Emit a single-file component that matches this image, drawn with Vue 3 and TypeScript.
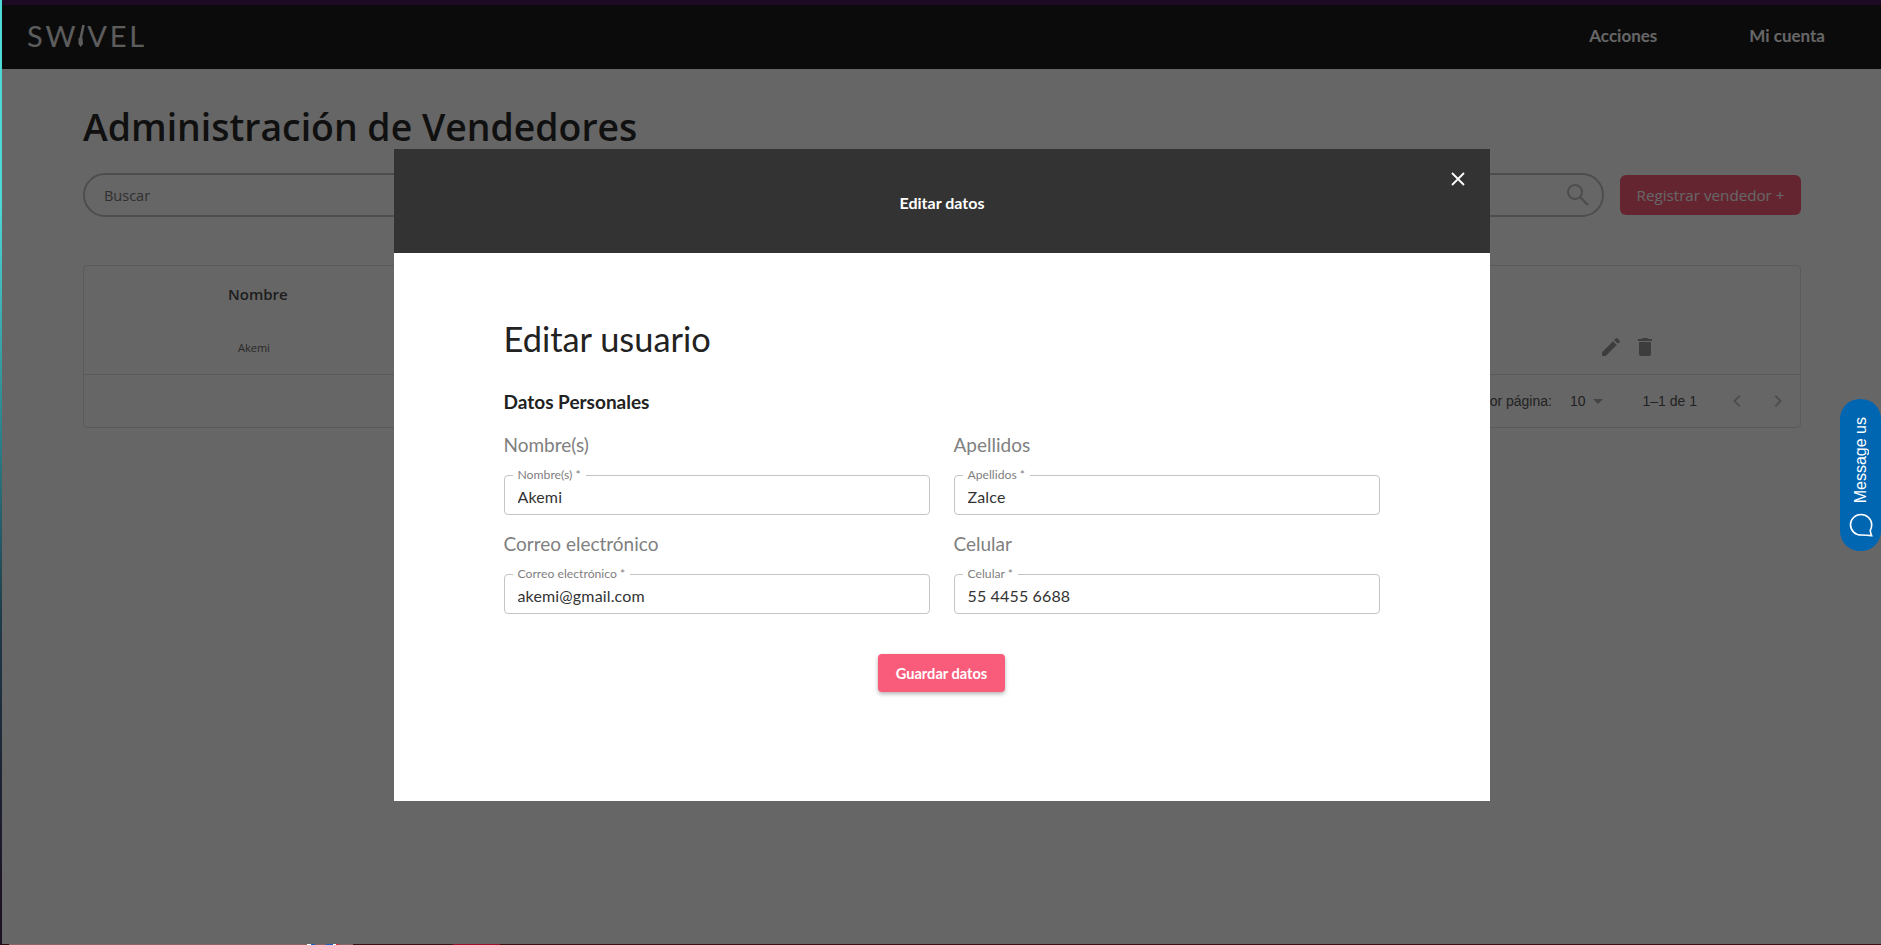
<script setup lang="ts">
const fields = [
  { label: 'Nombre(s)', value: 'Akemi' },
  { label: 'Apellidos', value: 'Zalce' },
  { label: 'Correo electrónico', value: 'akemi@gmail.com' },
  { label: 'Celular', value: '55 4455 6688' },
]
</script>

<template>
  <div class="page">
    <div class="top-strip" />
    <header class="navbar">
      <div class="logo">SW<svg class="logo-i" viewBox="0 0 10 24" width="10" height="24"><path d="M7.5 2 L4.5 16" stroke="currentColor" stroke-width="2.6" fill="none" /><path d="M2.5 15 L6.5 15 L7 21 L4.7 24 L2.5 21 Z" fill="currentColor" /></svg>VEL</div>
      <nav class="nav-links">
        <a>Acciones</a>
        <a>Mi cuenta</a>
      </nav>
    </header>

    <main class="content">
      <h1 class="title">Administración de Vendedores</h1>
      <div class="toolbar">
        <div class="search">
          <span class="search-text">Buscar</span>
          <svg viewBox="0 0 22 22" width="22" height="22" class="search-icon">
            <circle cx="8" cy="8" r="7" fill="none" stroke="currentColor" stroke-width="2" />
            <path d="M13 13 L21 21" stroke="currentColor" stroke-width="2.4" fill="none" />
          </svg>
        </div>
        <button class="register">Registrar vendedor +</button>
      </div>

      <section class="table">
        <div class="table-head">
          <span class="th">Nombre</span>
        </div>
        <div class="table-row">
          <span class="td">Akemi</span>
          <div class="row-actions">
            <svg viewBox="0 0 24 24" width="24" height="24"><path d="M3 17.25V21h3.75L17.81 9.94l-3.75-3.75L3 17.25zM20.71 7.04a1 1 0 0 0 0-1.41l-2.34-2.34a1 1 0 0 0-1.41 0l-1.83 1.83 3.75 3.75 1.83-1.83z" fill="currentColor" /></svg>
            <svg viewBox="0 0 24 24" width="24" height="24"><path d="M6 19c0 1.1.9 2 2 2h8c1.1 0 2-.9 2-2V7H6v12zM19 4h-3.5l-1-1h-5l-1 1H5v2h14V4z" fill="currentColor" /></svg>
          </div>
        </div>
        <div class="table-foot">
          <span>Filas por página:</span>
          <span class="per-page">10<i class="caret" /></span>
          <span class="range">1–1 de 1</span>
          <div class="pager">
            <svg viewBox="0 0 24 24" width="24" height="24"><path d="M15.41 7.41 14 6l-6 6 6 6 1.41-1.41L10.83 12z" fill="currentColor" /></svg>
            <svg viewBox="0 0 24 24" width="24" height="24"><path d="M8.59 16.59 10 18l6-6-6-6-1.41 1.41L13.17 12z" fill="currentColor" /></svg>
          </div>
        </div>
      </section>
    </main>

    <div class="overlay">
      <div class="modal">
        <div class="modal-head">
          <span class="modal-title">Editar datos</span>
          <svg class="close" viewBox="0 0 14 14" width="14" height="14"><path d="M1 1 L13 13 M13 1 L1 13" stroke="#fff" stroke-width="1.8" fill="none" /></svg>
        </div>
        <div class="modal-body">
          <h2 class="form-title">Editar usuario</h2>
          <h3 class="form-sub">Datos Personales</h3>
          <div class="form-grid">
            <div v-for="f in fields" :key="f.label" class="field">
              <label class="field-label">{{ f.label }}</label>
              <fieldset class="outline">
                <legend>{{ f.label }} *</legend>
                <input class="field-input" :value="f.value" readonly />
              </fieldset>
            </div>
          </div>
          <div class="actions">
            <button class="save">Guardar datos</button>
          </div>
        </div>
      </div>
    </div>

    <div class="message-us">
      <span class="message-text">Message us</span>
      <svg viewBox="0 0 24 24" width="24" height="24" class="message-icon">
        <path d="M12 1.5 C6.2 1.5 1.5 6 1.5 11.8 C1.5 17.6 6.2 22 12 22 C14 22 18 22 22.6 22.6 C22 21 21.5 19.5 21.2 17.5 C22.2 16 22.7 14 22.7 11.8 C22.7 6 17.8 1.5 12 1.5 Z" fill="none" stroke="#fff" stroke-width="1.6" />
      </svg>
    </div>
    <div class="bottom-strip" />
    <div class="left-strip" />
  </div>
</template>

<style scoped>
.page {
  position: relative;
  height: 945px;
  overflow: hidden;
  background: #fff;
  font-family: "Lato", sans-serif;
}
.top-strip { height: 5px; background: #4d1a5c; }
.navbar {
  height: 64px;
  background: #1c1c1c;
  display: flex;
  align-items: center;
  justify-content: space-between;
  padding: 0 56px 4px 27px;
  box-sizing: border-box;
}
.logo {
  display: flex;
  align-items: center;
  font-family: "Lato", sans-serif;
  font-weight: 400;
  font-size: 29px;
  letter-spacing: 2.8px;
  color: #e8e8e8;
}
.logo-i { margin: 0 1px 0 -2px; }
.nav-links {
  display: flex;
  gap: 92px;
  font-weight: 700;
  font-size: 17px;
  color: #fff;
}

.content { padding: 34px 80px 0 83px; }
.title {
  margin: 0;
  font-family: "Open Sans", sans-serif;
  font-weight: 600;
  font-size: 37.4px;
  line-height: 48px;
  color: #2a2a2a;
}
.toolbar {
  display: flex;
  align-items: center;
  gap: 16px;
  margin-top: 22px;
}
.search {
  flex: 1;
  height: 44px;
  box-sizing: border-box;
  border: 2px solid #c0c0c0;
  border-radius: 22px;
  display: flex;
  align-items: center;
  justify-content: space-between;
  padding: 0 13px 0 19px;
}
.search-text { font-family: "Open Sans", sans-serif; font-size: 14.5px; color: #777; }
.search-icon { color: #c0c0c0; }
.register {
  width: 181px;
  height: 40px;
  border: 0;
  border-radius: 6px;
  background: #f95c7b;
  color: #fff;
  font-family: "Open Sans", sans-serif;
  font-size: 15.2px;
}

.table {
  margin-top: 48px;
  border: 1px solid #e0e0e0;
  border-radius: 4px;
}
.table-head {
  height: 56px;
  padding-left: 144px;
  display: flex;
  align-items: center;
}
.th { font-family: "Open Sans", sans-serif; font-weight: 600; font-size: 15px; color: #4d4d4d; }
.table-row {
  height: 53px;
  border-bottom: 1px solid #e0e0e0;
  display: flex;
  align-items: center;
  justify-content: space-between;
  padding: 0 143px 2px 154px;
  box-sizing: border-box;
}
.td { font-family: "Open Sans", sans-serif; font-size: 11px; color: #666; }
.row-actions { display: flex; gap: 10px; color: #999; }
.table-foot {
  height: 52px;
  display: flex;
  align-items: center;
  justify-content: flex-end;
  padding-right: 10px;
  font-family: "Liberation Sans", sans-serif;
  font-size: 14px;
  color: #555;
}
.per-page { display: flex; align-items: center; margin-left: 18px; gap: 7px; }
.caret {
  width: 0;
  height: 0;
  border: 5px solid transparent;
  border-top-color: #aaa;
  border-bottom: 0;
}
.range { margin-left: 40px; }
.pager { display: flex; gap: 17px; margin-left: 28px; color: #c4c4c4; }

.overlay {
  position: absolute;
  inset: 0;
  background: rgba(0, 0, 0, 0.6);
  display: flex;
  justify-content: center;
  padding: 149px 0 0 3px;
}
.modal { width: 1096px; height: 652px; background: #fff; }
.modal-head {
  position: relative;
  height: 104px;
  background: #333;
  display: flex;
  align-items: center;
  justify-content: center;
  padding-top: 2px;
  box-sizing: border-box;
}
.modal-title { color: #fff; font-weight: 700; font-size: 16px; }
.close { position: absolute; top: 23px; right: 25px; }
.modal-body { padding: 64px 110.5px 0 109.5px; }
.form-title { margin: 0; font-weight: 400; font-size: 34.4px; line-height: 44px; color: #222; }
.form-sub { margin: 29px 0 0; font-weight: 700; font-size: 19px; line-height: 24px; color: #222; }
.form-grid {
  display: grid;
  grid-template-columns: 1fr 1fr;
  column-gap: 24px;
  row-gap: 17px;
  margin-top: 19px;
}
.field-label { display: block; font-size: 19px; line-height: 24px; color: #808080; }
.outline {
  margin: 12px 0 0;
  padding: 0 8px;
  height: 46px;
  box-sizing: border-box;
  border: 1.5px solid #c4c4c4;
  border-radius: 4px;
  min-width: 0;
}
.outline legend {
  padding: 0 5px;
  font-size: 12.2px;
  line-height: 12px;
  color: #808080;
}
.field-input {
  display: block;
  width: calc(100% - 5px);
  border: 0;
  outline: 0;
  padding: 0;
  margin: 1px 0 0 5px;
  height: 28px;
  font-family: "Lato", sans-serif;
  font-size: 16px;
  letter-spacing: 0.15px;
  color: #333;
  background: transparent;
}
.actions { display: flex; justify-content: center; margin-top: 40px; }
.save {
  width: 127px;
  height: 38px;
  border: 0;
  border-radius: 4px;
  background: #f95c7b;
  color: #fff;
  font-family: "Lato", sans-serif;
  font-weight: 700;
  font-size: 14.6px;
  box-shadow: 0 2px 4px rgba(0, 0, 0, 0.3);
}

.message-us {
  position: absolute;
  right: 0;
  top: 399px;
  width: 41px;
  height: 152px;
  border-radius: 20px;
  background: #0066b2;
  color: #fff;
  display: flex;
  flex-direction: column;
  align-items: center;
  justify-content: flex-end;
  padding-bottom: 14px;
  box-sizing: border-box;
  gap: 10px;
}
.message-text {
  writing-mode: vertical-rl;
  transform: rotate(180deg);
  font-family: "Liberation Sans", sans-serif;
  font-size: 16px;
}
.bottom-strip {
  position: absolute;
  left: 0;
  right: 0;
  bottom: 0;
  height: 1px;
  background: linear-gradient(to right, #2a0a0a 0 9px, #8a6464 9px 307px, #fff 307px 311px, #1a5cc8 311px 315px, #8a6464 315px 326px, #1a5cc8 326px 333px, #fff 333px 336px, #d83040 336px 339px, #8a6464 339px 353px, #3c1010 353px 453px, #a01028 453px 500px, #3c1010 500px);
}
.left-strip {
  position: absolute;
  left: 0;
  top: 0;
  bottom: 0;
  width: 2px;
  background: linear-gradient(to bottom, #4fd8d8 0, #4fd8d8 200px, #2b7f88 440px, #1f3a48 620px, #1c1224 900px);
}
</style>
